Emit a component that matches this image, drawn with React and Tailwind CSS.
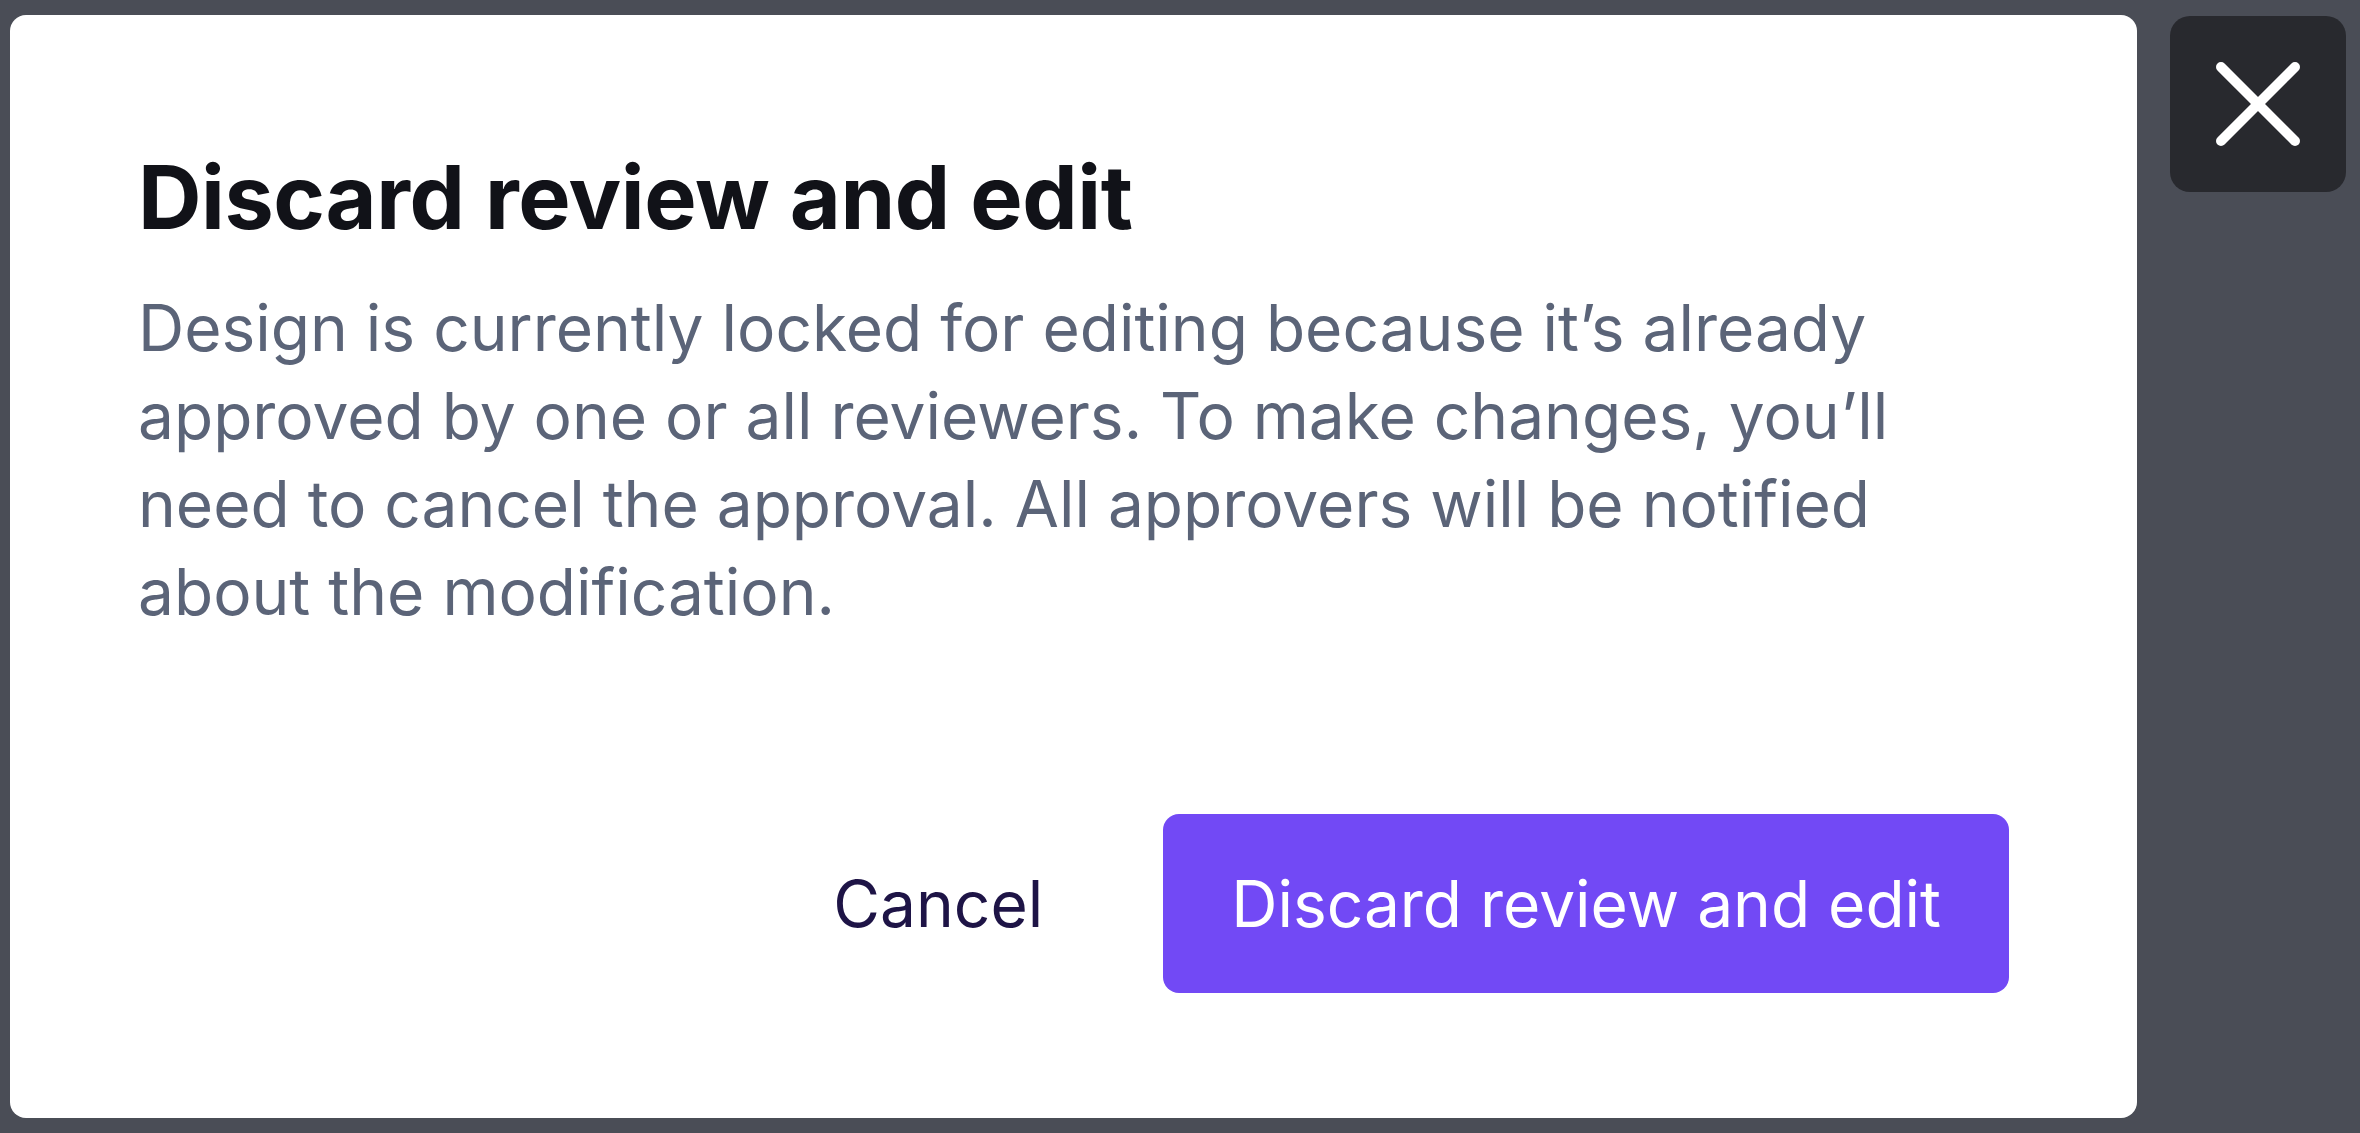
import React from 'react';

// Close "X" for the overlay
const CloseIcon = ({ className }) => (
  <svg className={className} xmlns="http://www.w3.org/2000/svg" width="84" height="84" viewBox="0 0 84 84" fill="none" stroke="currentColor" strokeWidth="10" strokeLinecap="round">
    <path d="M5 5L79 79"></path>
    <path d="M79 5L5 79"></path>
  </svg>
);

export default function App() {
  return (
    <div className="min-h-screen w-full bg-[#4a4d56] font-['Inter',sans-serif]">
      <div className="flex items-start gap-[33px] pl-[10px] pt-[15px]">
        <div className="w-[2127px] rounded-[16px] bg-white px-[128px] pt-[129px] pb-[125px]">
          <h1 className="text-[88px] leading-[106px] font-bold tracking-[-0.005em] text-[#111218]">
            Discard review and edit
          </h1>
          <p className="mt-[34px] max-w-[1800px] text-[64px] leading-[88px] text-[#5b6478]">
            Design is currently locked for editing because it’s already approved by one or all reviewers. To make changes, you’ll need to cancel the approval. All approvers will be notified about the modification.
          </p>
          <div className="mt-[178px] flex items-center justify-end gap-[56px]">
            <button className="px-[64px] text-[64px] leading-[88px] text-[#1e1446]">
              Cancel
            </button>
            <button className="h-[179px] rounded-[16px] bg-[#7249f5] px-[68px] text-[64px] leading-[88px] text-white">
              Discard review and edit
            </button>
          </div>
        </div>
        <button className="mt-[1px] flex h-[176px] w-[176px] items-center justify-center rounded-[20px] bg-[#28292e] text-white">
          <CloseIcon className="h-[84px] w-[84px]" />
        </button>
      </div>
    </div>
  );
}
